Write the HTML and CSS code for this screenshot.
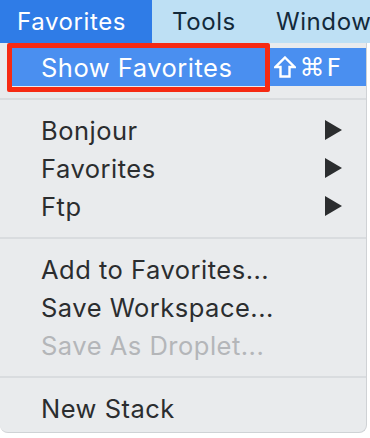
FILE: index.html
```html
<!DOCTYPE html>
<html>
	<head>
		<meta charset="utf-8" />
		<title>Favorites menu</title>
		<link rel="stylesheet" href="styles.css">
	</head>
	<body>
		<div class="menubar">
			<span class="menubar-item menubar-item-active">Favorites</span>
			<span class="menubar-item">Tools</span>
			<span class="menubar-item">Window</span>
		</div>
		<div class="menu">
			<div class="menu-row menu-row-active">
				<span class="menu-label">Show Favorites</span>
				<svg class="menu-shift" width="22" height="22" viewBox="0 0 22 22"><polygon points="11,1.5 20.5,11 15.5,11 15.5,20.5 6.5,20.5 6.5,11 1.5,11" /></svg>
				<span class="menu-shortcut">⌘F</span>
			</div>
			<div class="menu-sep"></div>
			<div class="menu-row">
				<span class="menu-label">Bonjour</span>
				<svg class="menu-arrow" width="17" height="20" viewBox="0 0 17 20"><polygon points="0,0 17,10 0,20" /></svg>
			</div>
			<div class="menu-row">
				<span class="menu-label">Favorites</span>
				<svg class="menu-arrow" width="17" height="20" viewBox="0 0 17 20"><polygon points="0,0 17,10 0,20" /></svg>
			</div>
			<div class="menu-row">
				<span class="menu-label">Ftp</span>
				<svg class="menu-arrow" width="17" height="20" viewBox="0 0 17 20"><polygon points="0,0 17,10 0,20" /></svg>
			</div>
			<div class="menu-sep"></div>
			<div class="menu-row">
				<span class="menu-label">Add to Favorites...</span>
			</div>
			<div class="menu-row">
				<span class="menu-label">Save Workspace...</span>
			</div>
			<div class="menu-row menu-row-disabled">
				<span class="menu-label">Save As Droplet...</span>
			</div>
			<div class="menu-sep"></div>
			<div class="menu-row">
				<span class="menu-label">New Stack</span>
			</div>
			<div class="callout"></div>
		</div>
	</body>
</html>
```

FILE: styles.css
```css
body{margin: 0px;padding: 0px;background: #fff;font-family: Inter, "Liberation Sans", sans-serif;overflow: hidden;}
.menubar{
	height: 43px;display: flex;align-items: center;
	background: #bee0f4;color: #13293a;
	font-size: 24px;letter-spacing: 0.6px;
	white-space: nowrap;overflow: hidden;
}
.menubar-item{height: 43px;line-height: 43px;padding: 0px 20px;flex-shrink: 0;}
.menubar-item-active{background: #2f7ce7;color: #fff;padding: 0px 0px 0px 17px;width: 135px;}
.menu{
	position: relative;width: 367px;
	padding: 5px 0px 5px;
	background: #e9ebed;
	border-right: 1px solid #cfd2d5;border-bottom: 1px solid #cfd2d5;
	border-radius: 0px 0px 8px 8px;
	box-sizing: border-box;
	color: #2b2d2f;font-size: 25.5px;letter-spacing: 0.5px;
}
.menu-row{
	height: 38px;display: flex;align-items: center;
	padding: 0px 24px 0px 41px;
	white-space: nowrap;
}
.menu-label{flex: 1;}
.menu-arrow{fill: #2b2d2f;}
.menu-row-active{background: #4a8ff0;color: #fff;margin-left: 12px;padding-left: 29px;padding-right: 23px;}
.menu-shift{fill: none;stroke: #fff;stroke-width: 2.4;stroke-linejoin: miter;margin-right: 4px;}
.menu-shortcut{font-family: "DejaVu Sans", sans-serif;font-size: 25px;letter-spacing: 2px;}
.menu-row-disabled{color: #b4b6b9;}
.menu-sep{height: 2px;background: #d9dcdf;margin: 12px 0px 11px;}
.callout{
	position: absolute;left: 7px;top: 0px;
	width: 263px;height: 49px;
	border: 5px solid #f62a13;border-radius: 2px;box-sizing: border-box;
}
```
